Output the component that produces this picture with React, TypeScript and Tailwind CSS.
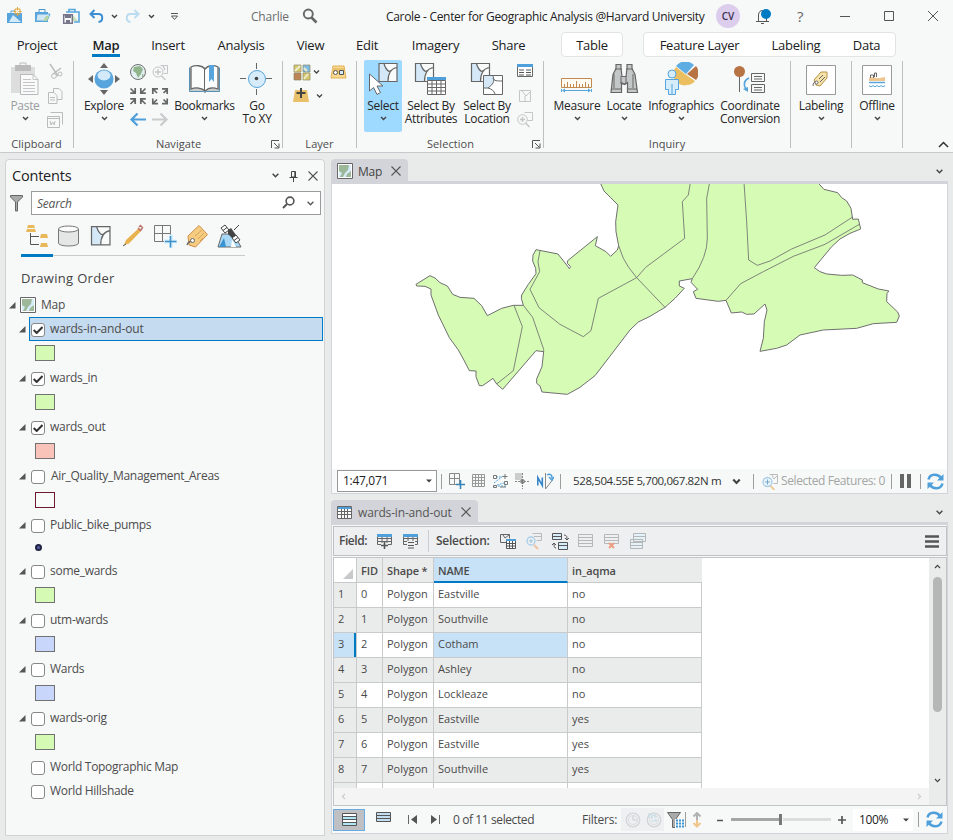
import React from "react";

type IcProps = { x: number; y: number; w: number; h: number; c?: string; children: React.ReactNode };

// Icons are drawn in window coordinates; x/y give the icon's own origin.
function Ic({ x, y, w, h, c = "", children }: IcProps) {
  return (
    <svg width={w} height={h} viewBox={`${x} ${y} ${w} ${h}`} fill="none" className={"block shrink-0 " + c}>
      {children}
    </svg>
  );
}

function Chev({ c = "", s = "#444", k = 1.4 }: { c?: string; s?: string; k?: number }) {
  return (
    <Ic x={0} y={0} w={7} h={5} c={c}>
      <path d="M1 1l2.5 2.6L6 1" stroke={s} strokeWidth={k} />
    </Ic>
  );
}

function Cross({ c = "", s = 9 }: { c?: string; s?: number }) {
  return (
    <svg width={s} height={s} viewBox="0 0 10 10" className={"block shrink-0 " + c} fill="none">
      <path d="M.5 .5l9 9M9.5 .5l-9 9" stroke="#555" strokeWidth="1.1" />
    </svg>
  );
}

function TitleBar() {
  return (
    <div className="flex h-8 items-center">
      <Ic x={5} y={7} w={18} h={18} c="ml-[5px]">
        <path d="M7 13h15v10H7z" fill="#57a5dc" />
        <path d="M11 13v-2h4" stroke="#57a5dc" />
        <path d="M9 22l4-7 8 7z" fill="#d6ebf8" />
        <path d="M15 9h5v5h-5zM17.500 7v9M13.500 11.500h8" stroke="#e0a63e" />
        <path d="M16.500 10.500h2v2h-2z" fill="#fff" />
      </Ic>
      <Ic x={34} y={7} w={18} h={18} c="ml-[11px]">
        <path d="M35 12h13v10H35z" fill="#57a5dc" />
        <path d="M39 12V9.500h6V12" stroke="#4b94c8" />
        <path d="M37 14h13l-3 7H36z" fill="#d2e7f2" stroke="#57a5dc" />
        <path d="M43 21l3-5 3 0-2 5z" fill="#b5d6a4" />
      </Ic>
      <Ic x={62} y={7} w={18} h={18} c="ml-[10px]">
        <path d="M66 12h13v10h-5M69 12V9.500h6V12" stroke="#57a5dc" strokeWidth="1.6" />
        <path d="M72 14l6 7h-5z" fill="#c8dfb9" />
        <path d="M63.700 14.700h8.600v8.600h-8.600z" fill="#f7f9f9" stroke="#77758a" strokeWidth="1.5" />
        <path d="M65 15h6v3h-6zM66 20h4v3h-4z" fill="#77758a" />
      </Ic>
      <Ic x={89} y={8} w={16} h={16} c="ml-[9px]">
        <path d="M94.500 10l-4 4 4 4M91 14h7.500c5 0 5 7.500 0 8" stroke="#3d8fd1" strokeWidth="2" />
      </Ic>
      <Chev c="ml-[6px]" />
      <Ic x={125} y={8} w={16} h={16} c="ml-[7px]">
        <path d="M134.500 10l4 4-4 4M138 14h-7.500c-5 0-5 7.500 0 8" stroke="#bcdcf0" strokeWidth="2" />
      </Ic>
      <Chev c="ml-[7px]" />
      <Ic x={170} y={11} w={10} h={10} c="ml-[15px]">
        <path d="M171 13.500h7M171.500 16l3 3.500 3-3.500z" stroke="#555" />
      </Ic>
      <span className="ml-[71px] mt-px w-[51px] text-[12px] tracking-[-0.2px] text-[#6b6b6b]">Charlie</span>
      <Ic x={302} y={8} w={17} h={17}>
        <circle cx="308.300" cy="14" r="4.500" stroke="#666" strokeWidth="1.9" />
        <path d="M311.500 17.500l5 5" stroke="#666" strokeWidth="2.600" />
      </Ic>
      <span className="ml-[67px] mt-px w-[330px] text-[12px] tracking-[-0.31px] text-[#222]">
        Carole - Center for Geographic Analysis @Harvard University
      </span>
      <span className="flex h-6 w-6 items-center justify-center rounded-full bg-[#dccdec] text-[10px] font-semibold text-[#3a3150]">
        CV
      </span>
      <Ic x={755} y={7} w={17} h={17} c="ml-[15px]">
        <path d="M756 20.500h13M758.500 20v-6c0-6 8-6 8 0v6M761 22.500h3" stroke="#555" />
        <circle cx="766" cy="13" r="5" fill="#007ac2" />
      </Ic>
      <span className="ml-[25px] w-[12px] text-[15px] text-[#666]">?</span>
      <Ic x={839} y={8} w={100} h={16} c="ml-[30px]">
        <path d="M840 16.500h10M884.500 11.500h9v9h-9zM928 11l10 10M938 11l-10 10" stroke="#555" />
      </Ic>
    </div>
  );
}

function TabBar() {
  const tab = "shrink-0 text-center";
  const plain = tab + " leading-[27px]";
  return (
    <div className="flex h-[26px] items-start text-[13px] tracking-[-0.25px] text-[#202020]">
      <span className={plain + " w-[74px]"}>Project</span>
      <span className={tab + " ml-[18px] h-[25px] w-[28px] border-b-[3px] border-[#007ac2] font-semibold leading-[27px]"}>Map</span>
      <span className={plain + " ml-[18px] w-[60px]"}>Insert</span>
      <span className={plain + " w-[86px]"}>Analysis</span>
      <span className={plain + " w-[53px]"}>View</span>
      <span className={plain + " w-[60px]"}>Edit</span>
      <span className={plain + " w-[77px]"}>Imagery</span>
      <span className={plain + " w-[69px]"}>Share</span>
      <span className={tab + " ml-[18px] h-[25px] w-[62px] rounded-[4px] border border-[#e1e3e4] bg-white leading-[25px]"}>Table</span>
      <div className="ml-5 flex h-[25px] w-[253px] rounded-[4px] border border-[#e1e3e4] bg-white leading-[25px]">
        <span className={tab + " w-[111px]"}>Feature Layer</span>
        <span className={tab + " w-[82px]"}>Labeling</span>
        <span className={tab + " w-[59px]"}>Data</span>
      </div>
    </div>
  );
}

function Group({ c, label, launcher, children }: { c: string; label?: string; launcher?: boolean; children: React.ReactNode }) {
  return (
    <div className={"flex h-[94px] shrink-0 flex-col " + c}>
      <div className="mt-[3px] flex h-[87px] flex-col border-r border-[#bdbfc0]">
        <div className="-mt-[1px] flex h-[76px] shrink-0">{children}</div>
        <div className="flex h-4 shrink-0 items-center justify-end">
          <span className="flex-1 text-center text-[11px] leading-[14px] tracking-[0.05px] text-[#4c4c4c]">{label}</span>
          {launcher && (
            <Ic x={0} y={0} w={9} h={9} c="-ml-3 mr-[2px]">
              <path d="M8 .5H.5V8M3 3l4.500 4.500M8 3.500V8H3.500" stroke="#555" />
            </Ic>
          )}
        </div>
      </div>
    </div>
  );
}

function Big({ c, lines, arrow, dim, children }: { c: string; lines: string[]; arrow?: boolean; dim?: boolean; children: React.ReactNode }) {
  return (
    <div className={"flex shrink-0 flex-col items-center " + c}>
      <div className="flex h-[39px] items-start justify-center pt-[2px]">{children}</div>
      <div className={"whitespace-nowrap text-center text-[12px] leading-[13px] tracking-[-0.3px] " + (dim ? "text-[#9a9c9e]" : "text-[#252525]")}>
        {lines.map((l) => (
          <div key={l}>{l}</div>
        ))}
      </div>
      {arrow && <Chev c="mt-[4px]" />}
    </div>
  );
}

const ward = "M1 1h18v18H1z";
function Parcel({ x, y, s = 19, fill = "#d4e8f7", stroke = "#666" }: { x: number; y: number; s?: number; fill?: string; stroke?: string }) {
  return (
    <g transform={`translate(${x} ${y}) scale(${s / 20})`}>
      <path d={ward} fill="#f9fafa" />
      <path d="M1 1h5c1 4 5 5 5 9s-2 5-1 9H1z" fill={fill} />
      <path d={ward + "M6 1c1 4 2 6 5 8M19 5c-6 1-9 5-9 14M11 9l2-1" } stroke={stroke} strokeWidth="1.2" />
    </g>
  );
}

function Ribbon() {
  return (
    <div className="flex h-[94px]">
      <Group c="w-[74px]" label="Clipboard">
        <Big c="ml-[9px] w-[32px]" lines={["Paste"]} arrow dim>
          <Ic x={10} y={62} w={30} h={34}>
            <path d="M11 67h24v26H11z" fill="#ddd" />
            <path d="M15 65h16v6H15z" fill="#bbb" />
            <path d="M20 66v-3h6v3" stroke="#bbb" />
            <path d="M20.500 74.500H33l5 5v15H20.500z" fill="#fafafa" stroke="#b7b9ba" />
            <path d="M33 74.500v5h5M23 79.500h8M23 82.500h12M23 85.500h12M23 88.500h12M23 91.500h12" stroke="#c3c5c6" />
          </Ic>
        </Big>
        <Ic x={46} y={60} w={18} h={70} c="ml-[5px]">
          <path d="M50 64l8 12M61 68l-8 6" stroke="#bbb" strokeWidth="1.500" />
          <circle cx="54" cy="76" r="2.400" stroke="#bbb" />
          <circle cx="60" cy="74" r="2" stroke="#bbb" />
          <path d="M53.500 88.500H59l3 3v8h-8.500z" stroke="#bbb" />
          <path d="M48.500 92.500H54l3 3v8h-8.500zM50 97.500h5M50 100h5" fill="#f7f9f9" stroke="#bbb" />
          <path d="M50.500 112.500h12v12" stroke="#bbb" />
          <path d="M47.500 116.500h12v11h-12zM48 118.500h11M50 121l1 4 1.500-3 1.500 3 1-4" fill="#f7f9f9" stroke="#bbb" />
        </Ic>
      </Group>
      <Group c="w-[209px]" label="Navigate" launcher>
        <Big c="ml-[9px] w-[42px]" lines={["Explore"]} arrow>
          <Ic x={87} y={62} w={34} h={34}>
            <circle cx="104" cy="79" r="9.500" fill="#57a5dc" />
            <ellipse cx="104" cy="75.500" rx="6.500" ry="5" fill="#d1e9f8" />
            <path d="M100 68l4-5 4 5zM100 90l4 5 4-5zM93 75l-5 4 5 4zM115 75l5 4-5 4z" fill="#666" />
          </Ic>
        </Big>
        <Ic x={128} y={60} w={42} h={70} c="ml-[3px]">
          <circle cx="138" cy="72" r="7.500" fill="#e2f0f4" stroke="#707070" />
          <path d="M134 67l6-1 3 3-2 5-3 4-2-5-3-2zM142 74l2 1-2 3z" fill="#91b48a" />
          <path d="M160.500 65.500h7v8h-4" stroke="#c3c5c6" />
          <circle cx="158" cy="72" r="5" stroke="#c3c5c6" fill="#f7f9f9" />
          <path d="M155 72h6M158 69v6M161.500 76l4 4M163 66l2 4" stroke="#c3c5c6" strokeWidth="1.300" />
          <g stroke="#666" strokeWidth="1.700">
            <path d="M130.500 88.500l4 4M135.200 88v5.200h-5M145.500 88.500l-4 4M140.800 88v5.200h5M130.500 104l4-4M135.200 104v-5.200h-5M145.500 104l-4-4M140.800 104v-5.200h5" />
            <path d="M153 89l4 4M152.800 94v-5.200h5.200M167.500 89l-4 4M167.200 94v-5.200H162M153 103.500l4-4M152.800 98.500v5.200h5.200M167.500 103.500l-4-4M167.200 98.500v5.200H162" />
          </g>
          <path d="M146 119.500h-14M137.500 113.500l-6 6 6 6" stroke="#4f9fdb" strokeWidth="2.200" />
          <path d="M152 119.500h14M160.500 113.500l6 6-6 6" stroke="#c9cbcc" strokeWidth="2.200" />
        </Ic>
        <Big c="ml-[4px] w-[61px]" lines={["Bookmarks"]} arrow>
          <Ic x={188} y={62} w={34} h={34}>
            <path d="M189.500 67.500v24h14l1.500 1 1.500-1h13v-24" fill="#c9cccd" stroke="#5691b5" />
            <path d="M205 69c-3-4-10-4-14-2v22c5-2 11-1 14 2 3-3 8-4 13-2V67c-4-2-10-2-13 2z" fill="#fafbfb" stroke="#666" strokeWidth="1.300" />
            <path d="M204.500 69v22" stroke="#666" />
            <path d="M209 65h5v17l-2.500-3-2.500 3z" fill="#57a5dc" />
          </Ic>
        </Big>
        <Big c="ml-[5px] w-[34px]" lines={["Go", "To XY"]}>
          <Ic x={240} y={62} w={34} h={34}>
            <circle cx="257" cy="79" r="8.500" fill="#d6ecfa" stroke="#57a5dc" />
            <path d="M256.500 63v6M256.500 89v6M240 78.500h6M266 78.500h6" stroke="#666" />
            <circle cx="256.500" cy="78.500" r="1.800" fill="#444" />
          </Ic>
        </Big>
      </Group>
      <Group c="w-[74px]" label="Layer">
        <Ic x={288} y={60} w={66} h={50} c="ml-[5px]">
          <path d="M294 65h7v7h-7zM303 73h7v7h-7z" fill="#d8c56d" stroke="#8d8b65" strokeWidth=".7" />
          <path d="M303 65h7v7h-7z" fill="#7fbbe3" stroke="#8d8b65" strokeWidth=".7" />
          <path d="M294 73h7v7h-7z" fill="#be8456" stroke="#8d8b65" strokeWidth=".7" />
          <path d="M295 71l5-5M304 68l3 3M304 79l4-5" stroke="#e8edcc" strokeWidth="2" />
          <path d="M314 70.500l2.500 2.500 2.500-2.500M317 94.500l2.500 2.500 2.500-2.500" stroke="#444" strokeWidth="1.300" />
          <path d="M333 66h11l2 12h-15z" fill="#f7d994" stroke="#e3b04c" />
          <path d="M332 68h12v6h-12z" fill="#ecc26c" />
          <path d="M339.500 70.500h4v4h-4z" fill="#d1e9f8" stroke="#555" />
          <circle cx="335.500" cy="72.500" r="2" fill="#fff" stroke="#555" />
          <path d="M295 90h12l2 12h-16z" fill="#eac06a" />
          <path d="M301 88v10M296.500 93h9" stroke="#444" strokeWidth="2" />
        </Ic>
      </Group>
      <Group c="w-[187px]" label="Selection" launcher>
        <div className="ml-[7px] h-[72px] w-[38px] rounded-[2px] bg-[#9edaff]">
          <Big c="w-[38px]" lines={["Select"]} arrow>
            <Ic x={367} y={62} w={34} h={34}>
              <Parcel x={379} y={62.500} s={20} />
              <path d="M370.500 74v17l4-3.500 3.500 7 3.500-2-3.500-6.500h6z" fill="#fff" stroke="#666" />
            </Ic>
          </Big>
        </div>
        <Big c="ml-[2px] w-[54px]" lines={["Select By", "Attributes"]}>
          <Ic x={414} y={62} w={34} h={34}>
            <Parcel x={414.500} y={62.500} s={20} />
            <path d="M427 77h19v17.500h-19z" fill="#fff" />
            <path d="M427.500 80.500h18v14h-18zM427.500 84h18M427.500 87.500h18M427.500 91h18M432 81v13M436.500 81v13M441 81v13" stroke="#666" />
            <path d="M427 77h19v3h-19z" fill="#4f9fdb" />
          </Ic>
        </Big>
        <Big c="ml-[2px] w-[54px]" lines={["Select By", "Location"]}>
          <Ic x={470} y={62} w={34} h={34}>
            <Parcel x={470.500} y={62.500} s={20} />
            <path d="M483.500 75.500h19v19h-19z" fill="#fff" stroke="#666" />
            <path d="M484 76h9c2 5 0 9-5 12h-4z" fill="#d4e8f7" />
            <path d="M493 76c2 6 0 8-5 12h-4M488 88c4 1 6 3 7 6M493 78c1 3 4 3 9 3" stroke="#666" />
          </Ic>
        </Big>
        <Ic x={516} y={60} w={20} h={70} c="ml-[2px]">
          <path d="M517.500 64.500h15v12h-15z" fill="#fff" stroke="#666" />
          <path d="M517 64h16v3h-16z" fill="#4f9fdb" />
          <path d="M519 70h5M519 72.500h5M519 75h5M526 70h5M526 72.500h5M526 75h5" stroke="#555" />
          <path d="M519.500 90.500h11v11h-11zM522 91l4 5 4-4M525 96v5" stroke="#c3c5c6" />
          <path d="M524.500 112.500h8v8h-5" stroke="#c3c5c6" />
          <circle cx="522.500" cy="119.500" r="4.800" stroke="#c3c5c6" />
          <path d="M520 119.500h5M522.500 117v5M525.500 123l4 4" stroke="#c3c5c6" strokeWidth="1.500" />
        </Ic>
      </Group>
      <Group c="w-[247px]" label="Inquiry">
        <Big c="ml-[10px] w-[46px]" lines={["Measure"]} arrow>
          <Ic x={560} y={62} w={34} h={34}>
            <path d="M561.500 78.500h30v9h-30z" fill="#fffaf2" stroke="#c28a50" />
            <path d="M564.500 87v-3M567.500 87v-5M570.500 87v-3M573.500 87v-3M576.500 87v-6M579.500 87v-3M582.500 87v-3M585.500 87v-5M588.500 87v-3" stroke="#c28a50" />
            <path d="M561.500 89v3M591.500 89v3M563 90.500h27" stroke="#57a5dc" />
            <path d="M562 90.500l3-2v4zM591 90.500l-3-2v4z" fill="#57a5dc" />
          </Ic>
        </Big>
        <Big c="ml-[6px] w-[36px]" lines={["Locate"]} arrow>
          <Ic x={608} y={62} w={34} h={34}>
            <path d="M617 64.500h5v4l1 8h4l1-8v-4h5v4l3 6 2.500 18h-10v-10l-3 2-3-2v10h-10.500l2-18 3-6z" fill="#c4c7c8" stroke="#666" strokeWidth="1.200" />
            <path d="M616 69h7M627 69h7M612 89h10M628 89h10M615 74v14M634 74v14M622 76v8h5v-8" stroke="#666" />
          </Ic>
        </Big>
        <Big c="ml-[6px] w-[66px]" lines={["Infographics"]} arrow>
          <Ic x={664} y={62} w={34} h={34}>
            <path d="M686 74L676 66a12 12 0 0118-1z" fill="#5eade2" />
            <path d="M687 74l9-8a11 11 0 010 14z" fill="#b87345" />
            <path d="M685 74l-9-7a11 11 0 0011 18 11 11 0 008-4z" fill="#ebbe60" />
            <circle cx="672" cy="74" r="4" fill="#d5ecfa" stroke="#57a5dc" />
            <path d="M665.500 79.500h13v10h-3v5h-7v-5h-3zM672 84v10" fill="#d5ecfa" stroke="#57a5dc" />
          </Ic>
        </Big>
        <Big c="ml-[6px] w-[60px]" lines={["Coordinate", "Conversion"]}>
          <Ic x={733} y={62} w={34} h={34}>
            <circle cx="739.500" cy="71.500" r="5.500" fill="#b87345" />
            <path d="M739.500 77v15M751.500 73.500h13v8h-13zM751.500 84.500h13v8h-13zM754 76.500h8M754 79h8M754 87.500h8M754 90h8" stroke="#666" />
            <path d="M749 78c-5 2-6 7-3 11" stroke="#57a5dc" strokeWidth="1.700" />
            <path d="M743 89l5 3v-5z" fill="#57a5dc" />
          </Ic>
        </Big>
      </Group>
      <Group c="w-[61px]">
        <Big c="w-[60px]" lines={["Labeling"]} arrow>
          <Ic x={805} y={62} w={32} h={34}>
            <path d="M806.500 65.500h29v29h-29z" fill="#fff" stroke="#999" />
            <path d="M814 80l7-8h6v6l-7 8-4-1z" fill="#f6e3aa" stroke="#b89145" />
            <path d="M819 79l4-4M820 82l5-5M813 86c0-3 1-4 3-4" stroke="#666" />
            <circle cx="816.500" cy="82.500" r="1.500" fill="#fff" stroke="#666" />
          </Ic>
        </Big>
      </Group>
      <Group c="w-[51px]">
        <Big c="w-[50px]" lines={["Offline"]} arrow>
          <Ic x={861} y={62} w={32} h={34}>
            <path d="M862.500 65.500h29v29h-29z" fill="#fff" stroke="#999" />
            <path d="M869 78c4-2 8 1 11 0l5-1v4h-16z" fill="#efc58d" />
            <path d="M870.500 78v-3h3v3M874.500 77v-4h2v4" stroke="#666" />
            <path d="M869 82.500h16" stroke="#57a5dc" strokeWidth="1.500" />
            <path d="M869 85.500c1.500 1.500 2.500 1.500 4 0 1.500 1.500 2.500 1.500 4 0 1.500 1.500 2.500 1.500 4 0 1.500 1.500 2.500 1.500 4 0" stroke="#57a5dc" />
          </Ic>
        </Big>
      </Group>
      <Ic x={938} y={141} w={11} h={7} c="ml-[35px] mt-[83px]">
        <path d="M939 147l4.500-4.500L948 147" stroke="#333" strokeWidth="1.500" />
      </Ic>
    </div>
  );
}

function MapIcon() {
  return (
    <Ic x={0} y={0} w={16} h={16}>
      <path d="M.5.500h15v15H.5z" fill="#fff" stroke="#666" />
      <path d="M2 2h12v12H2z" fill="#9cb898" />
      <path d="M14 2v6l-4 3-1 3H6l2-4 3-3 1-5zM2 8l3 2-2 4H2z" fill="#d5ecf8" />
    </Ic>
  );
}

type Layer = { name: string; on?: boolean; sel?: boolean; sym?: string; air?: boolean };
const layers: Layer[] = [
  { name: "wards-in-and-out", on: true, sel: true, sym: "border-[#727272] bg-[#d4fab4]" },
  { name: "wards_in", on: true, sym: "border-[#727272] bg-[#d4fab4]" },
  { name: "wards_out", on: true, sym: "border-[#727272] bg-[#fac3ba]" },
  { name: "Air_Quality_Management_Areas", sym: "border-[#6b1a30] bg-[#f9fbfb]", air: true },
  { name: "Public_bike_pumps", sym: "dot" },
  { name: "some_wards", sym: "border-[#727272] bg-[#d4fab4]" },
  { name: "utm-wards", sym: "border-[#727272] bg-[#c9d6fb]" },
  { name: "Wards", sym: "border-[#727272] bg-[#c9d6fb]" },
  { name: "wards-orig", sym: "border-[#727272] bg-[#d4fab4]" },
  { name: "World Topographic Map" },
  { name: "World Hillshade" },
];

function Tri({ c = "" }: { c?: string }) {
  return (
    <Ic x={0} y={0} w={7} h={7} c={c}>
      <path d="M0 6.500L6.500 0v6.500z" fill="#555" />
    </Ic>
  );
}

function LayerRow({ l }: { l: Layer }) {
  const tight = l.name.length > 14 && !l.sel;
  return (
    <div>
      <div className="flex h-6 items-center pl-[13px]">
        {l.sym ? <Tri /> : <span className="w-[7px]" />}
        <div
          className={
            "ml-[3px] flex h-6 w-[294px] items-center border " + (l.sel ? "border-[#007ac2] bg-[#c5dbef]" : "border-transparent")
          }
        >
          <span className="mt-[2px] ml-px flex h-[14px] w-[14px] items-center justify-center rounded-[3px] border border-[#888] bg-white">
            {l.on && (
              <Ic x={0} y={0} w={10} h={8}>
                <path d="M.7 4l3 3L9.500 1" stroke="#333" strokeWidth="2" />
              </Ic>
            )}
          </span>
          <span
            className={
              "text-[12px] leading-4 text-[#4c4c4c] " +
              (l.air ? "ml-[6px] " : "ml-[5px] ") +
              (tight ? "tracking-[-0.31px]" : l.sel ? "tracking-[-0.16px]" : "tracking-[-0.28px]")
            }
          >
            {l.name}
          </span>
        </div>
      </div>
      {l.sym === "dot" && (
        <div className="h-[22px] pl-[29px] pt-[7px]">
          <div className="h-[7px] w-[7px] rounded-full border-2 border-[#222340] bg-[#5560a8]" />
        </div>
      )}
      {l.sym && l.sym !== "dot" && (
        <div className="h-[25px] pl-[29px] pt-1">
          <div className={"h-4 w-5 border " + l.sym} />
        </div>
      )}
    </div>
  );
}

function Contents() {
  return (
    <div className="ml-[5px] mt-[6px] h-[677px] w-[320px] shrink-0 rounded-t-[4px] border border-[#d0d2d6] bg-[#f7f9f9]">
      <div className="flex h-[31px] items-center pl-[6px]">
        <span className="w-[260px] text-[14.500px] tracking-[-0.2px] text-[#222]">Contents</span>
        <Chev k={1.3} c="scale-[1.15]" />
        <Ic x={289} y={168} w={9} h={12} c="ml-[10px]">
          <path d="M291.500 169.500h4v5.500h-4zM289.500 175.500h8M293.500 176v4M294.800 170v5" stroke="#444" />
        </Ic>
        <Cross c="ml-[10px]" s={10} />
      </div>
      <div className="flex h-[24px] items-start">
        <Ic x={9} y={193} w={16} h={20} c="ml-[3px] mt-[2px]">
          <path d="M10.500 195.500h12v1.500l-5 5V211h-2v-9l-5-5z" fill="#aaa" stroke="#666" />
        </Ic>
        <div className="ml-[6px] flex h-6 w-[290px] items-center border border-[#999b9d] bg-white">
          <span className="w-[250px] pl-[5px] pt-px text-[12px] italic tracking-[-0.2px] text-[#555]">Search</span>
          <Ic x={282} y={196} w={14} h={14}>
            <circle cx="290" cy="201" r="3.900" stroke="#555" strokeWidth="1.600" />
            <path d="M287 204l-4 4" stroke="#555" strokeWidth="2" />
          </Ic>
          <Chev k={1.1} s="#555" c="ml-[11px] scale-[1.15]" />
        </div>
      </div>
      <div className="ml-[15px] mt-[8px] h-[34px] w-[224px]">
        <div className="flex h-[34px] bg-[linear-gradient(#c9cbcc,#c9cbcc)] bg-[length:100%_1px] bg-[position:0_32px] bg-no-repeat">
          <div className="h-[34px] w-8 border-b-[3px] border-[#007ac2]">
            <Ic x={21} y={223} w={32} h={30}>
              <path d="M28 225h6l1 3h-8zM27 229h8l1 3H26zM41 234h6l1 4h-8zM41 243h6l1 4h-8z" fill="#e8b85a" />
              <path d="M30.500 233v11.500H39M31 236.500h8" stroke="#555" />
            </Ic>
          </div>
          <Ic x={53} y={223} w={192} h={30}>
            <path d="M58.500 229v14c0 4 20 4 20 0v-14" fill="#e5e7e7" stroke="#777" />
            <ellipse cx="68.500" cy="229" rx="10" ry="3" fill="#fbfbfb" stroke="#777" />
            <Parcel x={90.500} y={225.500} s={20.500} />
            <path d="M124 245l2-5 13-12 2.500 2.500-12.500 13z" fill="#e9b24f" />
            <path d="M138 228l3 3M139 227l1.500-1.500 2 2-1.500 2.500" stroke="#be756f" strokeWidth="1.500" />
            <path d="M123 246l3-2" stroke="#555" />
            <path d="M154.500 225.500h16v16h-16zM162.500 226v15M155 233.500h15" stroke="#777" />
            <path d="M171 234.500V248M164 241.500h13" stroke="#d2efff" strokeWidth="4" />
            <path d="M170.500 236v11.500M165 241.500h11.500" stroke="#3f8fc4" strokeWidth="1.500" />
            <path d="M188 236l11-10.500 8.500 9-12 12.500-6.500-2z" fill="#f6cd80" stroke="#cf8c47" />
            <path d="M195 236l7-6M198 239l6-6M200 241l3-3" stroke="#d8a55c" />
            <path d="M187 245c1-3 3-4 6-4" stroke="#666" strokeWidth="1.300" />
            <circle cx="192.500" cy="240.500" r="2" fill="#fff" stroke="#666" />
            <path d="M218 247l4-13h12l7 13z" fill="#a8d8f5" stroke="#666" />
            <path d="M219 247l5-9 2 9z" fill="#3892d0" />
            <path d="M231 247l1-8 4 8z" fill="#fff" />
            <path d="M221 228l4-3 4 5-4 3zM232 238l4-3 4 5-4 3z" fill="#fff" stroke="#444" />
            <path d="M223 230.500l4-3M234 240.500l4-3" stroke="#444" />
            <path d="M228 230l3-2 5 7-4 3-4-4z" fill="#444" />
            <path d="M234 230l5-5" stroke="#444" />
          </Ic>
        </div>
      </div>
      <div className="ml-[15px] mt-[12px] h-[18px] text-[13px] leading-[19px] tracking-[0.3px] text-[#444]">Drawing Order</div>
      <div className="mt-[6px] flex h-6 items-center pl-[3px]">
        <Tri />
        <span className="ml-[4px]"><MapIcon /></span>
        <span className="ml-[5px] text-[12px] tracking-[-0.2px] text-[#4c4c4c]">Map</span>
      </div>
      {layers.map((l) => (
        <LayerRow key={l.name} l={l} />
      ))}
    </div>
  );
}

function WardMap() {
  return (
    <svg width="615" height="285" viewBox="332 184 615 285" fill="none" className="block bg-white">
      <g transform="translate(330 155) scale(.33333)" stroke="#6e6e6e" strokeWidth="3" strokeLinejoin="round">
        <path
          fill="#d5fbb5"
          d="M258 388L300 362L315 369L330 383L352 393L368 418L390 427L432 430L455 452L472 482L515 460L550 451H580L574 430L575 420L595 388L618 356L617 340L608 318L609 300L618 284L684 297L710 330L718 341L722 335L712 325L713 317L802 245L796 272L828 290L842 304L862 285L866 272L858 230L857 200L864 150L822 108L808 77H1459L1470 90L1482 103L1523 113L1535 128L1550 138L1563 160L1568 193L1585 192L1592 222L1560 235L1530 252L1505 275L1453 338L1470 350L1490 357L1535 361L1568 360L1597 375L1597 383L1645 402L1677 408L1671 415L1670 440L1703 471L1708 483L1700 502L1630 506L1580 520L1480 525L1410 540L1370 570L1340 580L1290 589L1300 550L1303 500L1311 465L1305 447L1272 477L1250 478L1235 471L1204 474L1188 436L1165 439L1098 430L1090 410L1103 403L1083 382L1087 371L1048 378V393L1063 400L1035 430L1005 457L960 484L925 501L900 525L845 597L795 662L750 697L712 718L636 711L630 693L620 685V672L636 635L641 590L618 587L518 703L500 687L489 670L458 692H448L438 665V648L418 647L400 612L385 585L358 548L325 480L303 420V402L285 394L260 393Z"
        />
        <path
          strokeWidth="2.500"
          d="M580 451L608 487L641 583V590M552 451L577 515L550 647L500 687M630 287L624 320L629 350L600 403L627 458L690 508L760 545L783 527L805 430L920 368L947 337L1064 250L1057 140L1075 120L1082 77M866 272L880 310L896 337L920 368L1005 457M1087 371Q1132 305 1132 250L1130 130L1139 82M1242 82L1250 200L1256 315L1282 331L1320 318L1385 282L1485 240L1568 186M1188 436L1232 386L1300 350L1390 304L1485 268L1588 208"
        />
      </g>
    </svg>
  );
}

function Refresh({ c = "" }: { c?: string }) {
  return (
    <Ic x={0} y={0} w={17} h={17} c={c}>
      <path d="M1.500 6.500C3 .5 11 .5 14 5M15.500 10.500C14 16.500 6 16.500 3 12" stroke="#4f9fdb" strokeWidth="2.500" />
      <path d="M16.500 1v6.500H10zM.5 16V9.500H7z" fill="#4f9fdb" />
    </Ic>
  );
}

const sep = "h-[15px] w-px shrink-0 bg-[#9b9d9f]";

function MapPane() {
  return (
    <div className="h-[335px] w-[617px]">
      <div className="flex h-[22px] items-center">
        <div className="flex h-[22px] w-[77px] items-center rounded-t-[4px] bg-[#d2d4d9] pl-[6px] pt-[2px]">
          <MapIcon />
          <span className="ml-[5px] w-[33px] pt-px text-[12px] tracking-[-0.2px] text-[#444]">Map</span>
          <Cross s={10} />
        </div>
        <Chev c="ml-[528px] mt-[2px] scale-[1.15]" k={1.2} />
      </div>
      <div className="h-[313px] border border-t-[3px] border-[#d2d4d9] bg-[#f6f9f8]">
        <WardMap />
        <div className="flex h-[24px] items-center">
          <div className="ml-[5px] flex h-[22px] w-[100px] shrink-0 items-center justify-between border border-[#999] bg-white pl-[5px] pr-1 text-[12px] tracking-[-0.3px] text-[#222]">
            1:47,071
            <Ic x={0} y={0} w={6} h={4}><path d="M0 .5h6L3 3.500z" fill="#444" /></Ic>
          </div>
          <span className={sep + " ml-[4px]"} />
          <Ic x={448} y={472} w={106} h={18} c="ml-[6px]">
            <path d="M449.500 473.500h10v11h-10zM454.500 474v10M450 478.500h9" stroke="#888" />
            <path d="M460.500 480v9M456 484.500h9" stroke="#3886b9" strokeWidth="1.600" />
            <path d="M472.500 474.500h12v12h-12zM475.500 475v11M478.500 475v11M481.500 475v11M473 477.500h11M473 480.500h11M473 483.500h11" stroke="#999" />
            <path d="M494 483l9-7M496 477h6M498 486h8M494 486l10-3" stroke="#57a5dc" strokeDasharray="2 1" />
            <path d="M493.500 475.500h3v3h-3zM505 474v5M502.500 476.500h5M493.500 485.500h3v2h-3zM504.500 481.500h3v3h-3zM500 487h6" stroke="#777" />
            <path d="M515 473h7v7h-7z" fill="#ccc" />
            <path d="M522.500 473v16M515 481.500h15" stroke="#888" strokeDasharray="2 1" />
            <path d="M521 480h3v3h-3z" stroke="#666" />
            <path d="M537.800 485.500v-8l4.500 8v-8" stroke="#3886c9" strokeWidth="1.600" />
            <path d="M545.500 473v16l7-9" stroke="#888" />
            <path d="M547 475c3-2 5 0 5 3M549 477l3 3 2-3" stroke="#4f9fdb" strokeWidth="1.500" />
          </Ic>
          <span className={sep + " ml-[6px]"} />
          <span className="ml-[12px] w-[160px] shrink-0 whitespace-nowrap text-[11.500px] tracking-[-0.38px] text-[#333]">528,504.55E 5,700,067.82N m</span>
          <Chev k={1.7} c="scale-[1.3]" />
          <span className={sep + " ml-[13px]"} />
          <Ic x={759} y={472} w={19} h={18} c="ml-[6px]">
            <path d="M768.500 474.500h8v9h-4M771 475l2 4 3-3" stroke="#bbb" />
            <circle cx="766.500" cy="482" r="4.500" fill="#eaf4fb" stroke="#abcde6" strokeWidth="1.300" />
            <path d="M764 482h5M766.500 479.500v5" stroke="#78a9cb" />
            <path d="M769.500 486l4 4" stroke="#edcb9a" strokeWidth="2" />
          </Ic>
          <span className="ml-[2px] w-[110px] shrink-0 whitespace-nowrap text-[12px] tracking-[-0.4px] text-[#a4a5a4]">Selected Features: 0</span>
          <span className={sep} />
          <Ic x={0} y={0} w={12} h={14} c="ml-[8px]"><path d="M0 0h4v14H0zM7 0h4v14H7z" fill="#666" /></Ic>
          <span className={sep + " ml-[8px]"} />
          <Refresh c="ml-[6px]" />
        </div>
      </div>
    </div>
  );
}

const rows: [number, string, string][] = [
  [0, "Eastville", "no"],
  [1, "Southville", "no"],
  [2, "Cotham", "no"],
  [3, "Ashley", "no"],
  [4, "Lockleaze", "no"],
  [5, "Eastville", "yes"],
  [6, "Eastville", "yes"],
  [7, "Southville", "yes"],
];

function TableToolbar() {
  return (
    <div className="flex h-[30px] items-center border border-[#bfc1c5] bg-[#eeeff1] text-[12px] font-semibold text-[#4a4a4a]">
      <span className="ml-[5px] w-[37px] tracking-[-0.45px]">Field:</span>
      <Ic x={376} y={532} w={18} h={18}>
        <path d="M377.500 534.500h14v10h-14zM378 538.500h13M378 541.500h13M382 535v9M387 535v9" stroke="#666" />
        <path d="M377 534h15v3h-15z" fill="#4f9fdb" />
        <path d="M381 543h7v6h-7z" fill="#eeeff1" />
        <path d="M384.500 542v7M381 545.500h7" stroke="#555" strokeWidth="1.600" />
      </Ic>
      <Ic x={402} y={532} w={18} h={18} c="ml-[8px]">
        <path d="M403.500 534.500h14v10h-14zM404 538.500h13M404 541.500h13M408 535v9M413 535v9" stroke="#666" />
        <path d="M403 534h15v3h-15z" fill="#4f9fdb" />
        <path d="M407 541h8v8h-8z" fill="#eeeff1" />
        <path d="M408 542.500h6M408 545.500h6M408 548h6" stroke="#555" />
      </Ic>
      <span className="ml-[8px] h-[22px] w-px bg-[#cbcdd0]" />
      <span className="ml-[7px] w-[63px] tracking-[-0.25px]">Selection:</span>
      <Ic x={499} y={531} w={150} h={20}>
        <path d="M500.500 534.500v8h6M500.500 534.500h9v4M503 535l2 3 4-3" stroke="#666" />
        <path d="M506.500 539.500h9v9h-9zM507 543.500h8M507 546h8M509.500 541v7M512.500 541v7" fill="#fff" stroke="#555" />
        <path d="M506 539h10v2h-10z" fill="#4f9fdb" />
        <path d="M532.500 533.500h9v7h-5M534 536.500h7" stroke="#bbb" />
        <circle cx="531" cy="541" r="4" stroke="#a6cfe9" strokeWidth="1.300" />
        <path d="M529 541h4M531 539v4" stroke="#9ac5e0" />
        <path d="M534 545l4 4" stroke="#f0c2a2" strokeWidth="2" />
        <path d="M552.500 533.500h9v6h-9zM553 536.500h8M558.500 542.500h9v7h-9zM559 545.500h8" fill="#d8edf9" stroke="#555" />
        <path d="M564 535c3 0 3 2 3 5M565 538l2 2 2-2M556 548c-2 0-2-2-2-5M552 545l2-2 2 2" stroke="#555" />
        <path d="M578.500 534.500h14v12h-14zM579 537.500h13M579 540.500h13M579 543.500h13M604.500 534.500h14v9h-14zM605 537.500h13M605 540.500h13" stroke="#b5b7b9" />
        <path d="M609 543l5 5M614 543l-5 5" stroke="#ee9d82" strokeWidth="2" />
        <path d="M633.500 533.500h12v8h-12zM634 536.500h11M630.500 539.500h12v9h-12zM631 542.500h11M631 545.500h11" fill="#e4f1f8" stroke="#b5b7b9" />
      </Ic>
      <Ic x={0} y={0} w={14} h={13} c="ml-[276px]"><path d="M0 1.500h14M0 6.500h14M0 11.500h14" stroke="#555" strokeWidth="2.500" /></Ic>
    </div>
  );
}

function AttributeGrid() {
  const g = "grid grid-cols-[23px_26px_51px_134px_134px]";
  const cell = "flex items-center border-r border-b border-[#c8cacb] overflow-hidden ";
  return (
    <div className="mt-px h-[249px] border border-[#c3c5c8] bg-[#f3f4f4]">
      <div className="flex h-[247px] w-[612px]">
        <div className="flex h-[247px] w-[595px] flex-col">
          <div className="h-[230px] overflow-hidden bg-white">
            <div className={g + " h-[25px] w-[368px] bg-[#eaeceb] text-[11px] font-semibold tracking-[-0.15px] text-[#4a4a4a]"}>
              <div className={cell + "justify-end bg-white pr-[3px]"}><Ic x={0} y={0} w={10} h={10} c="mt-2"><path d="M10 0v10H0z" fill="#c7c9ca" /></Ic></div>
              <div className={cell + "pl-1 pt-[2px]"}>FID</div>
              <div className={cell + "whitespace-nowrap pl-1 pt-[2px]"}>Shape *</div>
              <div className="flex items-center border-b-2 border-r border-b-[#007ac2] border-r-[#c8cacb] bg-[#c7e2f6] pl-1 pt-[3px]">NAME</div>
              <div className="flex items-center border-b border-[#c8cacb] pl-1 pt-[2px]">in_aqma</div>
            </div>
            {rows.map(([fid, name, aqma], i) => (
              <div key={fid} className={g + " h-[25px] w-[368px] text-[11px] leading-[14px] text-[#4a4a4a] " + (i % 2 ? "bg-[#eaeceb]" : "bg-white")}>
                <div className={cell + "pl-1 pb-[2px] " + (fid === 2 ? "bg-[#c7e2f6] shadow-[inset_-2px_0_0_#007ac2]" : "bg-[#eaeceb]")}>{i + 1}</div>
                <div className={cell + "pl-1 pb-[2px]"}>{fid}</div>
                <div className={cell + "pl-1 pb-[2px]"}>Polygon</div>
                <div className={cell + "pl-1 pb-[2px] " + (fid === 2 ? "bg-[#c7e2f6]" : "")}>{name}</div>
                <div className={cell + "pl-1 pb-[2px]"}>{aqma}</div>
              </div>
            ))}
            <div className={g + " h-[5px] w-[368px]"}>
              <div className="border-r border-[#c8cacb] bg-[#eaeceb]" />
              <div className="border-r border-[#c8cacb]" />
              <div className="border-r border-[#c8cacb]" />
              <div className="border-r border-[#c8cacb]" />
              <div className="border-r border-[#c8cacb]" />
            </div>
          </div>
          <div className="flex h-[17px] items-center justify-between bg-[#f4f4f4] px-[6px]">
            <Chev c="rotate-90" s="#ccc" k={1.2} />
            <Chev c="-rotate-90" s="#ccc" k={1.2} />
          </div>
        </div>
        <div className="flex w-[17px] flex-col items-center bg-[#eaeceb]">
          <Chev c="mt-[6px] rotate-180" k={1.2} />
          <div className="mt-[8px] h-[135px] w-[9px] rounded-full bg-[#b5b6b6]" />
          <Chev c="mt-[66px]" k={1.2} />
        </div>
      </div>
    </div>
  );
}

function TableFooter() {
  return (
    <div className="flex h-[27px] items-center text-[12px] text-[#4a4a4a]">
      <div className="flex h-[22px] w-8 shrink-0 items-center justify-center border border-[#69abe0] bg-[#bec0c3]">
        <Ic x={0} y={0} w={15} h={13}>
          <path d="M.5.500h14v12H.5z" fill="#fff" stroke="#555" />
          <path d="M1 4h13v2H1zM1 9h13v3H1z" fill="#b1e6f6" />
          <path d="M1 3.500h13M1 6.500h13M1 9.500h13" stroke="#555" />
        </Ic>
      </div>
      <Ic x={0} y={0} w={15} h={10} c="-mt-[5px] ml-[11px]">
        <path d="M.5.500h14v9H.5zM1 3.500h13M1 6.500h13" fill="#c4dcef" stroke="#555" />
      </Ic>
      <Ic x={407} y={814} w={34} h={11} c="ml-[16px]">
        <path d="M408.500 815v9M439.500 815v9" stroke="#666" />
        <path d="M417 815v9l-6-4.500zM431 815v9l6-4.500z" fill="#555" />
      </Ic>
      <span className="ml-[12px] w-[129px] shrink-0 tracking-[-0.4px]">0 of 11 selected</span>
      <span className="w-[39px] shrink-0 tracking-[-0.25px]">Filters:</span>
      <div className="flex h-[23px] w-[43px] shrink-0 items-center gap-[5px] bg-[#eef0f2] pl-1">
        {[0, 1].map((n) => (
          <Ic key={n} x={0} y={0} w={16} h={16}>
            <circle cx="8" cy="8" r="6.800" stroke="#d3d5d8" strokeWidth="1.300" />
            <circle cx="8" cy="8" r="4.500" stroke="#d9dbdd" />
            <path d={n ? "M3 1v5M6 1v6M9 1v5M5 9h6l-2-2" : "M8 4v4h4"} stroke={n ? "#bfd8e7" : "#c8cacd"} />
          </Ic>
        ))}
      </div>
      <Ic x={666} y={811} w={19} h={18} c="ml-[2px]">
        <path d="M667.500 812.500h13l-5 7v8h-3v-8z" fill="#aaa" stroke="#666" />
        <path d="M675 819h9v9h-9z" fill="#f7f9f9" />
        <path d="M676 820.500h8M676 823.500h8M676 826.500h8" stroke="#3b94d1" strokeWidth="2" strokeDasharray="2 1" />
      </Ic>
      <span className={sep} />
      <Ic x={0} y={0} w={10} h={16} c="ml-[6px]">
        <path d="M5 8V1M1.500 4.500L5 1l3.500 3.500" stroke="#b2b2b2" strokeWidth="2" />
        <path d="M5 8v6M1.500 11L5 14.500 8.500 11" stroke="#f0c68d" strokeWidth="2" />
      </Ic>
      <Ic x={716} y={812} w={132} h={16} c="ml-[14px]">
        <path d="M717 820.500h6M838 820h8M842 816v8" stroke="#555" strokeWidth="1.700" />
        <path d="M731 819.500h49" stroke="#a5a7a7" strokeWidth="3" />
        <path d="M783 819.500h48" stroke="#dcdedd" strokeWidth="3" />
        <path d="M779 814h3v11h-3z" fill="#777" />
      </Ic>
      <div className="ml-[5px] flex h-[22px] w-[60px] shrink-0 items-center bg-white pl-[6px] tracking-[-0.35px] text-[#222]">
        <span className="w-[44px]">100%</span>
        <Ic x={0} y={0} w={6} h={4}><path d="M0 .5h6L3 3.500z" fill="#444" /></Ic>
      </div>
      <span className={sep + " ml-[5px]"} />
      <Refresh c="ml-[7px]" />
    </div>
  );
}

function TablePane() {
  return (
    <div className="mt-[6px] h-[334px] w-[617px]">
      <div className="flex h-[22px] items-center">
        <div className="flex h-[22px] w-[147px] items-center rounded-t-[4px] bg-[#d2d4d9] pl-[6px] pt-[2px]">
          <Ic x={337} y={505} w={15} h={13}>
            <path d="M337.500 505.500h14v12h-14zM338 510.500h13M338 513.500h13M341.500 508v9M344.500 508v9M347.500 508v9" fill="#fff" stroke="#666" />
            <path d="M338 506h13v2h-13z" fill="#4f9fdb" />
          </Ic>
          <span className="ml-[6px] w-[103px] whitespace-nowrap pt-px text-[12px] tracking-[-0.16px] text-[#555]">wards-in-and-out</span>
          <Cross s={10} />
        </div>
        <Chev c="ml-[458px] mt-[2px] scale-[1.15]" k={1.2} />
      </div>
      <div className="h-[312px] border border-t-[3px] border-[#d2d4d9] bg-[#f7f9f9] pl-px pt-px">
        <TableToolbar />
        <AttributeGrid />
        <TableFooter />
      </div>
    </div>
  );
}

export default function App() {
  return (
    <div className="h-[840px] w-[953px] overflow-hidden bg-[#e9ebea] font-['Open_Sans','Noto_Sans',sans-serif]">
      <div className="h-[153px] border-b border-[#c7c9ca] bg-[#f7f9f9]">
        <TitleBar />
        <TabBar />
        <Ribbon />
      </div>
      <div className="flex h-[687px]">
        <Contents />
        <div className="ml-[6px] mt-[6px]">
          <MapPane />
          <TablePane />
        </div>
      </div>
    </div>
  );
}
